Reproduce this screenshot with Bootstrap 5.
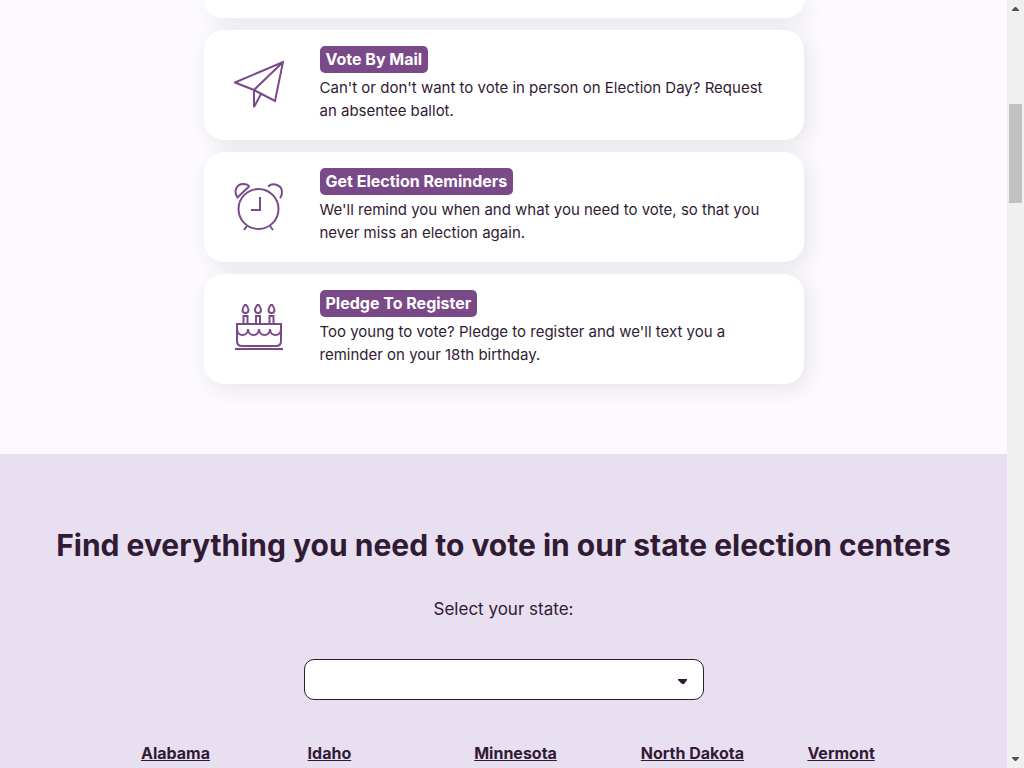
<!DOCTYPE html>
<html lang="en">
<head>
<meta charset="utf-8">
<meta name="viewport" content="width=device-width, initial-scale=1">
<title>Vote</title>
<link href="https://cdn.jsdelivr.net/npm/bootstrap@5.3.0/dist/css/bootstrap.min.css" rel="stylesheet">
<style>
  body { font-family: Inter, "Liberation Sans", sans-serif; color: #311b34; background: #fcfaff; }
  .tools { max-width: 600px; gap: 12px; padding-bottom: 70px; }
  .tool { background: #fff; border-radius: 20px; box-shadow: 5px 5px 20px rgba(49, 27, 52, .1); padding: 16px 30px 18px; }
  .tool-end { height: 18px; border-radius: 0 0 20px 20px; padding: 0; }
  .tool svg { width: 50px; height: 50px; margin: 2px 36px 0 0; fill: none; stroke: #7a4988; stroke-width: 2; }
  .tool p { font-size: 15px; line-height: 23px; }
  .tag { background: #7a4988; color: #fff; font-size: 16px; line-height: 27px; font-weight: 700; border-radius: 5px; padding: 0 6px; margin-bottom: 3px; }
  .tag:hover { color: #fff; }
  .centers { background: #e8dff0; padding-top: 72px; }
  .centers h2 { font-size: 30px; line-height: 38px; font-weight: 700; margin-bottom: 32px; }
  .centers label { font-size: 17px; line-height: 26px; margin-bottom: 37px; }
  .centers .form-select { max-width: 400px; height: 41px; border: 1px solid #311b34; border-radius: 10px; background-color: #fff;
    background-image: url("data:image/svg+xml,%3Csvg xmlns='http://www.w3.org/2000/svg' viewBox='0 0 9 5'%3E%3Cpath d='M0 0h9v1L6 5H4L0 1z' fill='%23311b34'/%3E%3C/svg%3E");
    background-size: 9px 5px; background-position: right 16px top 19px; margin-bottom: 41px; }
  .states { max-width: 833px; }
  .states .col { padding-left: 54px; }
  .states a { color: #311b34; font-size: 16px; line-height: 24px; font-weight: 700; }
  .scroller { width: 17px; background: #f0f0f0; }
  .scroller svg { width: 7px; height: 4px; margin: 7px 9px 0 5px; fill: #505050; }
  .scroller svg:last-child { margin: 0 9px 7px 5px; }
  .thumb { width: 13px; height: 99px; margin: 93px 2px auto; background: #c1c1c1; }
</style>
</head>
<body>
<div class="d-flex vh-100 overflow-hidden">
  <main class="flex-grow-1 d-flex flex-column overflow-hidden">
    <section class="tools w-100 mx-auto d-flex flex-column flex-shrink-0">
      <div class="tool tool-end"></div>
      <article class="tool d-flex align-items-center">
        <svg class="flex-shrink-0" viewBox="0 0 50 50" aria-hidden="true"><path d="M1 22.500 49 2 41 41 20 30zM20 30 49 2M20 30v17l7-13"/></svg>
        <div><a href="#mail" class="tag d-table text-decoration-none">Vote By Mail</a>
        <p class="mb-0">Can't or don't want to vote in person on Election Day? Request an absentee ballot.</p></div>
      </article>
      <article class="tool d-flex align-items-center">
        <svg class="flex-shrink-0" viewBox="0 0 50 50" aria-hidden="true"><circle cx="24.500" cy="27" r="20"/><path d="M26 15v13h-9M13 44l-3 4M36 44l3 4M3.500 15.500C-1 9 3 2 9 2q5 0 6 2.500zM34 4.500C39 0 48 3 48 10q0 4-2 6"/></svg>
        <div><a href="#reminders" class="tag d-table text-decoration-none">Get Election Reminders</a>
        <p class="mb-0">We'll remind you when and what you need to vote, so that you never miss an election again.</p></div>
      </article>
      <article class="tool d-flex align-items-center">
        <svg class="flex-shrink-0" viewBox="0 0 50 50" aria-hidden="true"><path d="M1 45h48M3 20h44v17q0 5-5 5H8q-5 0-5-5zM3 25c0 8 11 8 11 0 0 8 11 8 11 0 0 8 11 8 11 0 0 8 11 8 11 0M9.500 20v-8h4v8M22 20v-8h4v8M35.500 20v-8h4v8M11.500 0q-3 4-3 6a3 3 0 0 0 6 0q0-2-3-6zM24 0q-3 4-3 6a3 3 0 0 0 6 0q0-2-3-6zM37.500 0q-3 4-3 6a3 3 0 0 0 6 0q0-2-3-6z"/></svg>
        <div><a href="#pledge" class="tag d-table text-decoration-none">Pledge To Register</a>
        <p class="mb-0">Too young to vote? Pledge to register and we'll text you a reminder on your 18th birthday.</p></div>
      </article>
    </section>
    <section class="centers flex-grow-1 text-center">
      <h2>Find everything you need to vote in our state election centers</h2>
      <label for="state">Select your state:</label>
      <select id="state" class="form-select mx-auto"><option></option><option>Alabama</option><option>Idaho</option><option>Minnesota</option><option>North Dakota</option><option>Vermont</option></select>
      <nav class="states mx-auto row g-0 text-start text-nowrap" aria-label="States">
        <div class="col"><a href="#al">Alabama</a></div>
        <div class="col"><a href="#id">Idaho</a></div>
        <div class="col"><a href="#mn">Minnesota</a></div>
        <div class="col"><a href="#nd">North Dakota</a></div>
        <div class="col"><a href="#vt">Vermont</a></div>
      </nav>
    </section>
  </main>
  <div class="scroller d-flex flex-column flex-shrink-0" aria-hidden="true">
    <svg viewBox="0 0 7 4"><path d="M3 0h1l3 3v1H0V3z"/></svg>
    <div class="thumb"></div>
    <svg viewBox="0 0 7 4"><path d="M0 0h7v1L4 4H3L0 1z"/></svg>
  </div>
</div>
<script src="https://cdn.jsdelivr.net/npm/bootstrap@5.3.0/dist/js/bootstrap.bundle.min.js"></script>
</body>
</html>
